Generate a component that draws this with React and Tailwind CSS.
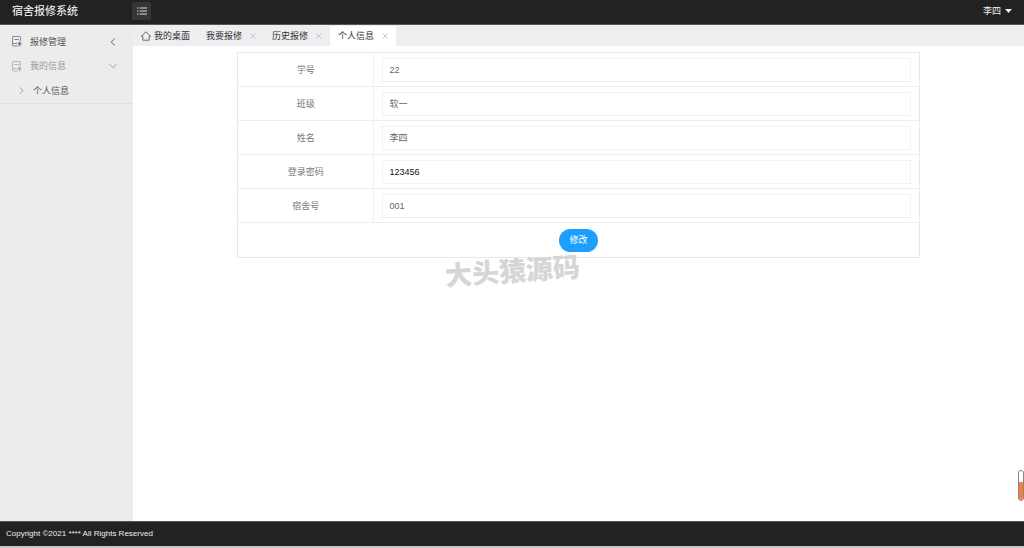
import React from 'react'

const tabs = [
    { name: '我要报修', active: false },
    { name: '历史报修', active: false },
    { name: '个人信息', active: true },
]

const fields = [
    { id: 'studentNo', label: '学号', value: '22', readOnly: true },
    { id: 'className', label: '班级', value: '软一', readOnly: true },
    { id: 'name', label: '姓名', value: '李四', readOnly: true },
    { id: 'password', label: '登录密码', value: '123456', readOnly: false },
    { id: 'dormNo', label: '宿舍号', value: '001', readOnly: true },
]

const FormIcon = () => (
    <svg className="h-[11px] w-[10px] shrink-0 opacity-80" viewBox="0 0 10 11" fill="none" stroke="currentColor" strokeWidth="0.8">
        <path d="M8.5 5V1.1a.6.6 0 0 0-.6-.6H1.1a.6.6 0 0 0-.6.6v8.3c0 .4.2.6.6.6h4.6" />
        <path d="M2.2 3.5h4.8M.5 7.5h4.4" />
        <path d="M7.6 5.6 9.6 7.8H5.6z" fill="currentColor" strokeWidth="0.3" />
        <path d="M7.6 7v3.4M6 8.9h3.2" />
    </svg>
)

const HomeIcon = () => (
    <svg className="h-[10px] w-[10px] shrink-0" viewBox="0 0 10 10" fill="none" stroke="currentColor" strokeWidth="0.7">
        <path d="M.4 5.2 5 .8l4.6 4.4H8.2v4H1.8v-4z" />
    </svg>
)

const CloseIcon = () => (
    <svg className="h-[6px] w-[6px]" viewBox="0 0 6 6" fill="none" stroke="currentColor" strokeWidth="0.8">
        <path d="M.4.4l5.2 5.2M5.6.4.4 5.6" />
    </svg>
)

const ArrowIcon = ({ className }) => (
    <svg className={className} viewBox="0 0 8 8" fill="none" stroke="currentColor" strokeWidth="0.9">
        <path d="M2.2.6 5.8 4 2.2 7.4" />
    </svg>
)

function Header() {
    return (
        <header className="flex h-[25px] items-center border-b border-[#5c5554] bg-[#222] pb-0.5 text-white">
            <h1 className="w-[132px] pl-3 text-[11px] leading-4">宿舍报修系统</h1>
            <button aria-label="菜单" className="flex h-[18px] w-[19px] items-center justify-center rounded-xs bg-[#363636] text-[#ddd]">
                <svg className="h-[8px] w-[10px]" viewBox="0 0 10 8" fill="none" stroke="currentColor">
                    <path d="M0 1h1.4M2.6 1H10M0 4h1.4M2.6 4H10M0 7h1.4M2.6 7H10" />
                </svg>
            </button>
            <button className="mr-3 ml-auto flex items-center gap-1 text-[9px] text-[#eee]">
                李四
                <svg className="h-[4px] w-[7px]" viewBox="0 0 7 4" fill="currentColor">
                    <path d="M0 0h7L3.5 4z" />
                </svg>
            </button>
        </header>
    )
}

function Sidebar() {
    return (
        <nav className="w-[133px] shrink-0 bg-[#ececec] pt-[5px] text-[9px] text-[#555]">
            <a href="#repair" className="flex h-6 items-center border-b border-[#e8e8e8] pr-4 pl-3">
                <FormIcon />
                <span className="ml-2">报修管理</span>
                <ArrowIcon className="ml-auto h-2 w-2 rotate-180" />
            </a>
            <div className="border-b border-[#e0e0e0]">
                <a href="#mine" className="flex h-6 items-center pr-4 pl-3 text-[#999]">
                    <FormIcon />
                    <span className="ml-2">我的信息</span>
                    <ArrowIcon className="ml-auto h-2 w-2 rotate-90" />
                </a>
                <a href="#profile" className="flex h-[25px] items-center pl-[18px]">
                    <ArrowIcon className="h-[7px] w-[7px] text-[#888]" />
                    <span className="ml-2">个人信息</span>
                </a>
            </div>
        </nav>
    )
}

function TabBar() {
    return (
        <div className="flex h-[21px] bg-[#eeeef0] pt-px text-[9px] text-[#333]">
            <button className="flex items-center gap-[3px] px-2">
                <HomeIcon />
                我的桌面
            </button>
            {tabs.map((tab) => (
                <div key={tab.name} className={tab.active ? 'flex items-center gap-2 bg-white px-2' : 'flex items-center gap-2 px-2'}>
                    <button>{tab.name}</button>
                    <button aria-label="关闭" className="text-[#bbb]"><CloseIcon /></button>
                </div>
            ))}
        </div>
    )
}

function ProfileForm() {
    return (
        <form className="px-[104px] pt-1.5" onSubmit={(e) => e.preventDefault()}>
            <table className="w-full table-fixed border-collapse border border-[#e8e8e8] text-[9px] text-[#777]">
                <tbody>
                    {fields.map((field) => (
                        <tr key={field.id} className="h-[34px] border-b border-[#ededed]">
                            <th scope="row" className="w-1/5 border-r border-[#f0f0f0] font-normal">
                                <label htmlFor={field.id}>{field.label}</label>
                            </th>
                            <td className="px-2">
                                <input
                                    id={field.id}
                                    defaultValue={field.value}
                                    readOnly={field.readOnly}
                                    className={field.readOnly
                                        ? 'block h-6 w-full border border-[#f2f2f2] px-1.5 text-[#666] outline-none'
                                        : 'block h-6 w-full border border-[#f2f2f2] px-1.5 text-[#111] outline-none'}
                                />
                            </td>
                        </tr>
                    ))}
                    <tr className="h-[35px]">
                        <td colSpan={2} className="text-center">
                            <button type="submit" className="h-[23px] rounded-full bg-[#1e9fff] px-[10px] align-middle text-white">修改</button>
                        </td>
                    </tr>
                </tbody>
            </table>
        </form>
    )
}

const App = () => {
    return (
        <div className="relative flex min-h-screen flex-col bg-white font-['Liberation_Sans','Noto_Sans_CJK_SC',sans-serif] leading-3">
            <Header />
            <div className="flex grow">
                <Sidebar />
                <main className="min-w-0 grow">
                    <TabBar />
                    <ProfileForm />
                </main>
            </div>
            <footer className="flex h-[27px] items-center border-t border-b-2 border-t-[#555] border-b-[#c9c6c8] bg-[#222] pl-1.5 text-[8px] text-[#eee]">
                Copyright ©2021 **** All Rights Reserved
            </footer>
            <div className="pointer-events-none absolute inset-0 flex items-center justify-center pb-1 text-[27px] leading-7 font-black text-[#d6d6d6]">
                <span className="-rotate-4">大头猿源码</span>
            </div>
            <div className="absolute right-0 bottom-[47px] flex h-[31px] w-[6px] flex-col justify-end overflow-hidden rounded-sm border border-[#888] bg-white">
                <div className="h-[18px] bg-[#f58040]"></div>
            </div>
        </div>
    )
}

export default App
